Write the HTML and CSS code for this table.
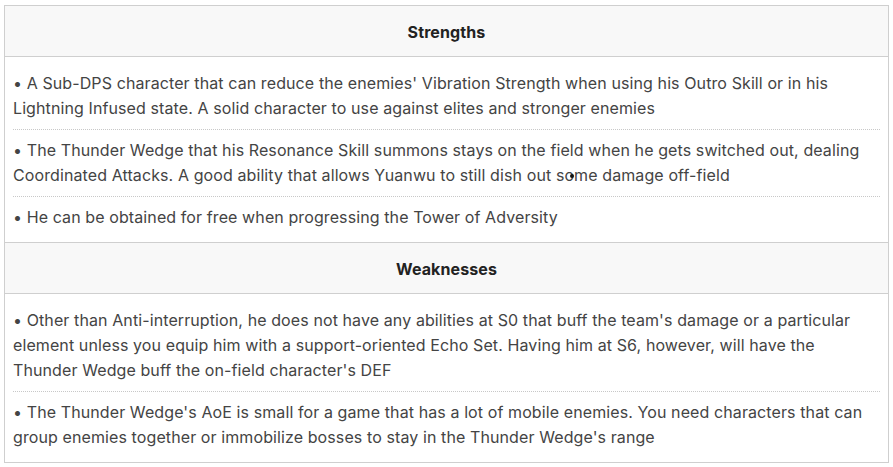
FILE: index.html
```html
<!DOCTYPE html>
<html>
<head>
<meta charset="utf-8">
<link rel="stylesheet" href="styles.css">
</head>
<body>
<table class="pros-cons">
  <tr><th class="head">Strengths</th></tr>
  <tr><td class="cell">
    <div class="item">• A Sub-DPS character that can reduce the enemies' Vibration Strength when using his Outro Skill or in his Lightning Infused state. A solid character to use against elites and stronger enemies</div>
    <div class="item with-cursor">• The Thunder Wedge that his Resonance Skill summons stays on the field when he gets switched out, dealing Coordinated Attacks. A good ability that allows Yuanwu to still dish out some damage off-field</div>
    <div class="item">• He can be obtained for free when progressing the Tower of Adversity</div>
  </td></tr>
  <tr><th class="head">Weaknesses</th></tr>
  <tr><td class="cell">
    <div class="item">• Other than Anti-interruption, he does not have any abilities at S0 that buff the team's damage or a particular element unless you equip him with a support-oriented Echo Set. Having him at S6, however, will have the Thunder Wedge buff the on-field character's DEF</div>
    <div class="item">• The Thunder Wedge's AoE is small for a game that has a lot of mobile enemies. You need characters that can group enemies together or immobilize bosses to stay in the Thunder Wedge's range</div>
  </td></tr>
</table>
</body>
</html>
```
FILE: styles.css
```css
html, body {
  margin: 0;
  padding: 0;
  background: #fff;
}
body {
  padding: 5px 4px 0 4px;
  font-family: Inter, "Noto Sans", sans-serif;
  font-size: 16px;
  color: #444;
}
.pros-cons {
  width: 885px;
  border-collapse: collapse;
  border: 1px solid #cfcfcf;
}
.head {
  background: #f8f8f8;
  color: #222;
  font-weight: 700;
  font-size: 16px;
  letter-spacing: 0.1px;
  text-align: center;
  height: 48px;
  padding: 2px 0 0 0;
  border-bottom: 1px solid #cfcfcf;
  border-top: 1px solid #cfcfcf;
}
.cell {
  padding: 6px 8px 4px 8px;
  line-height: 25px;
  letter-spacing: 0.1px;
}
.item {
  padding: 8px 0;
  border-bottom: 1px dotted #c8c8c8;
}
.item:last-child {
  border-bottom: none;
}
.with-cursor {
  position: relative;
}
.with-cursor::after {
  content: "";
  position: absolute;
  left: 557px;
  top: 44px;
  width: 4px;
  height: 4px;
  border-radius: 50%;
  background: #111;
}
```
